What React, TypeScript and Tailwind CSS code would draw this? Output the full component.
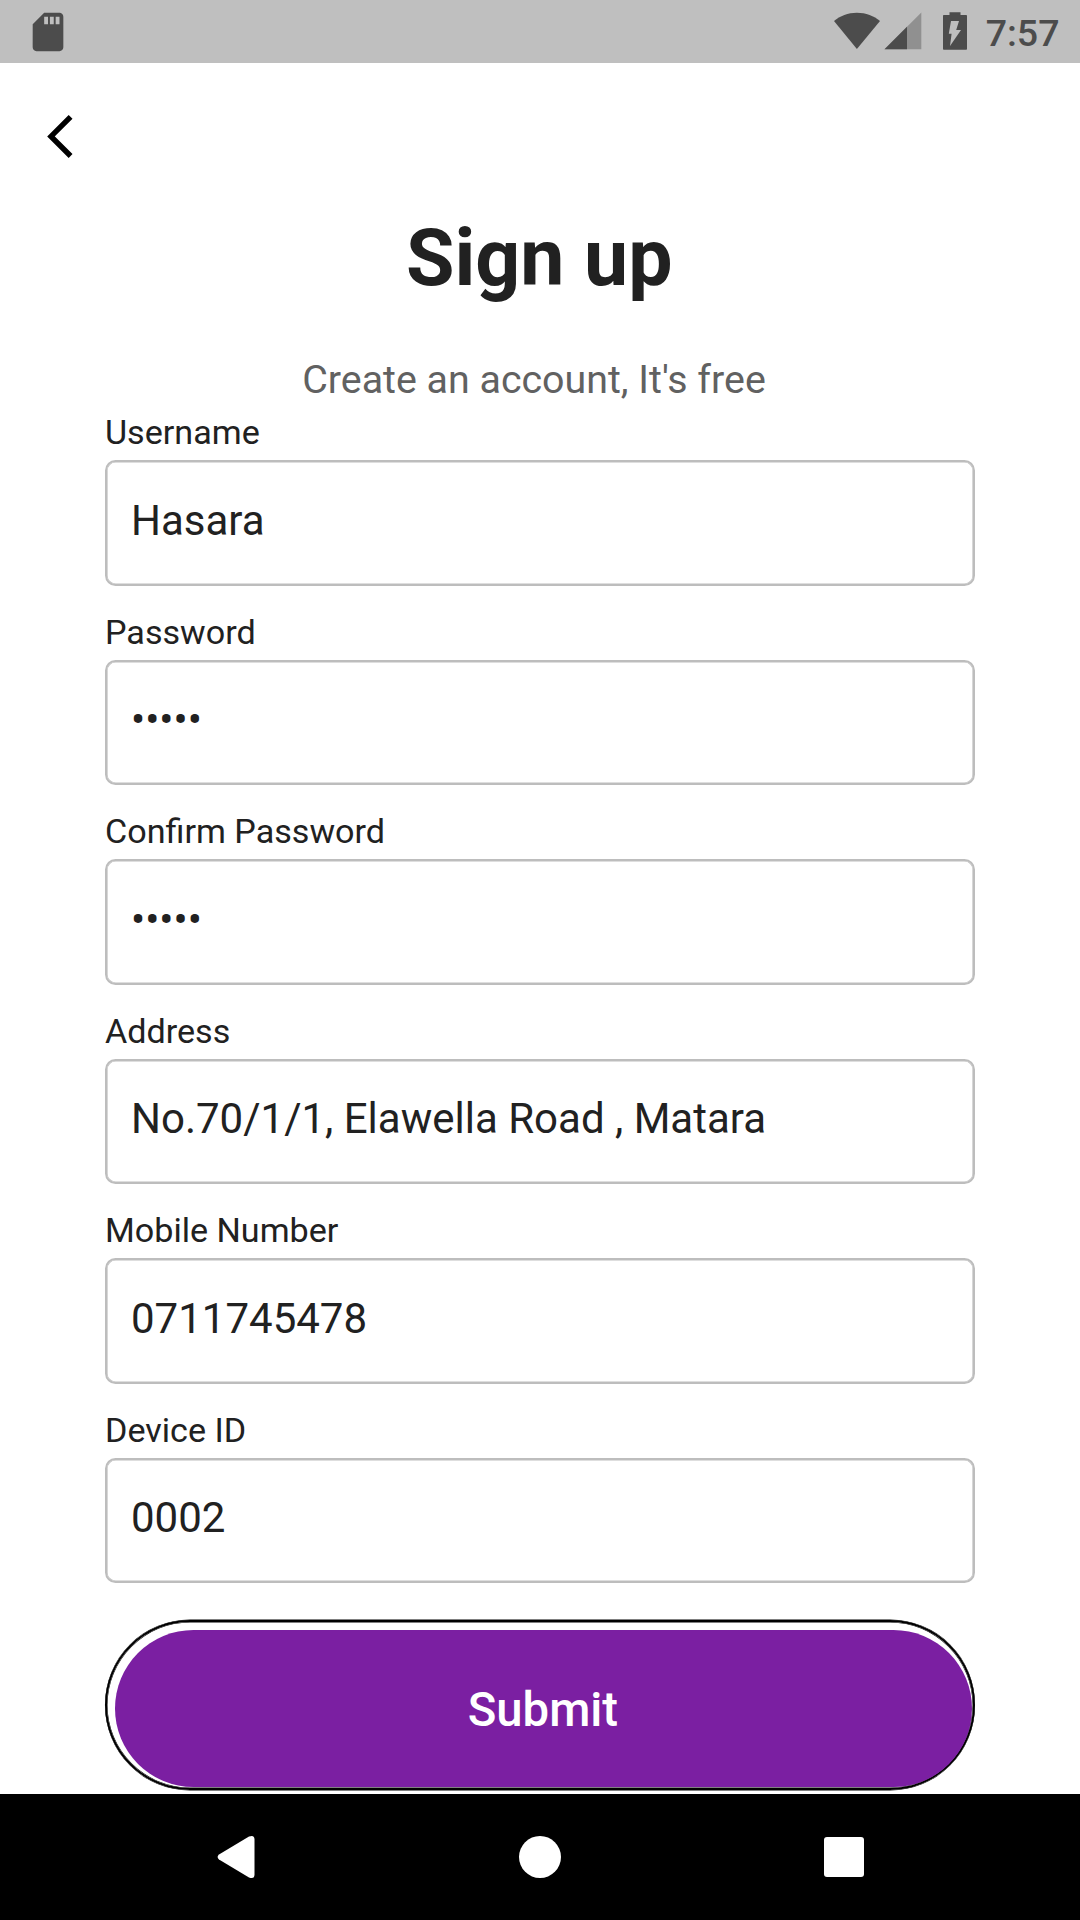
const fields = [
  { label: "Username", value: "Hasara" },
  { label: "Password", value: "•••••" },
  { label: "Confirm Password", value: "•••••" },
  { label: "Address", value: "No.70/1/1, Elawella Road , Matara" },
  { label: "Mobile Number", value: "0711745478" },
  { label: "Device ID", value: "0002" },
];

function StatusBar() {
  return (
    <div className="flex h-[63px] shrink-0 items-start bg-[#bfbfbf] text-[#4c4c4c]">
      <svg className="mt-[8.5px] ml-[24.5px] h-[46px] w-[46px]" viewBox="0 0 24 24" fill="currentColor">
        <path d="M18 2h-8L4.02 8 4 20c0 1.1.9 2 2 2h12c1.1 0 2-.9 2-2V4c0-1.1-.9-2-2-2zm-6 6h-2V4h2v4zm3 0h-2V4h2v4zm3 0h-2V4h2v4z" />
      </svg>
      <div className="flex-1" />
      <svg className="h-[63px] w-[50px]" viewBox="0 0 50 63" fill="currentColor">
        <path d="M26.9 49 4 21C10 16 18 12.8 26.9 12.8S44 16 50 21Z" />
      </svg>
      <svg className="h-[63px] w-[50px]" viewBox="0 0 50 63" fill="currentColor">
        <path d="M4.5 49.3 41.3 12.5V49.3Z" opacity="0.4" />
        <path d="M4.5 49.3 27 26.8V49.3Z" />
      </svg>
      <svg className="h-[63px] w-[56px]" viewBox="0 0 56 63" fill="currentColor" fillRule="evenodd">
        <path d="M19.5 12.2H30.5V15H36.2Q37 15 37 15.8V49Q37 49.8 36.2 49.8H13.8Q13 49.8 13 49V15.8Q13 15 13.8 15H19.5ZM21 21H29L26.2 30H31L20 46L21.6 33.8H18.8Z" />
      </svg>
      <div className="mt-[11px] mr-[20.5px] flex w-[73.5px] justify-end text-[37.5px] leading-[44px] font-medium whitespace-nowrap">7:57</div>
    </div>
  );
}

function NavBar() {
  return (
    <div className="grid h-[126px] shrink-0 grid-cols-3 place-items-center bg-black px-[84px] text-white">
      <svg className="h-[44px] w-[40px]" viewBox="0 0 40 44" fill="currentColor">
        <path d="M3 19.6 33 1.6Q38.5-.5 38.5 4.5V39.5Q38.5 44.5 33 42.4L3 24.4Q.2 22 3 19.6Z" />
      </svg>
      <div className="size-[42px] rounded-full bg-white" />
      <div className="size-[40px] rounded-[3px] bg-white" />
    </div>
  );
}

export default function App() {
  return (
    <div className="flex h-[1920px] w-[1080px] flex-col overflow-hidden bg-white font-['Roboto',sans-serif] text-[#212121]">
      <StatusBar />
      <main className="flex flex-1 flex-col">
        <div className="h-[149px] pt-[49px] pl-[42px]">
          <svg className="h-[50px] w-[36px]" viewBox="0 0 36 50" fill="none" stroke="#000" strokeWidth="5.4">
            <path d="M28.6 4.8 9 24.4 28.6 44" />
          </svg>
        </div>
        <h1 className="pr-[1.5px] text-center text-[78.75px] leading-[92px] font-bold">Sign up</h1>
        <p className="mt-[53px] pr-[12px] text-center text-[39.375px] leading-[46px] text-[#616161]">
          Create an account, It's free
        </p>
        <div className="mt-[9px] flex flex-col px-[105px]">
          {fields.map((f) => (
            <div key={f.label} className="flex h-[199.5px] flex-col">
              <div className="h-[48.2px] text-[34.125px] leading-[40px]">{f.label}</div>
              <div className="h-[125.6px] rounded-[10.5px] border-2 border-[#bdbdbd] px-[24px] pt-[33.7px] text-[42px] leading-[49px] whitespace-nowrap shadow-[inset_0_0_0_0.6px_#bdbdbd]">
                {f.value}
              </div>
            </div>
          ))}
        </div>
        <div className="mx-[105px] mt-[11px] h-[170px] rounded-full border-2 border-black pt-[8.2px] pr-[0.6px] pl-[8.4px] shadow-[0_0.5px_0_0_#000,0_-0.5px_0_0_#000,inset_0_0_0_0.5px_#000]">
          <button className="block h-[157.2px] w-full rounded-full bg-[#7b1fa2] pt-[3px] pr-[2px] text-[47.25px] font-medium text-white">
            Submit
          </button>
        </div>
      </main>
      <NavBar />
    </div>
  );
}
